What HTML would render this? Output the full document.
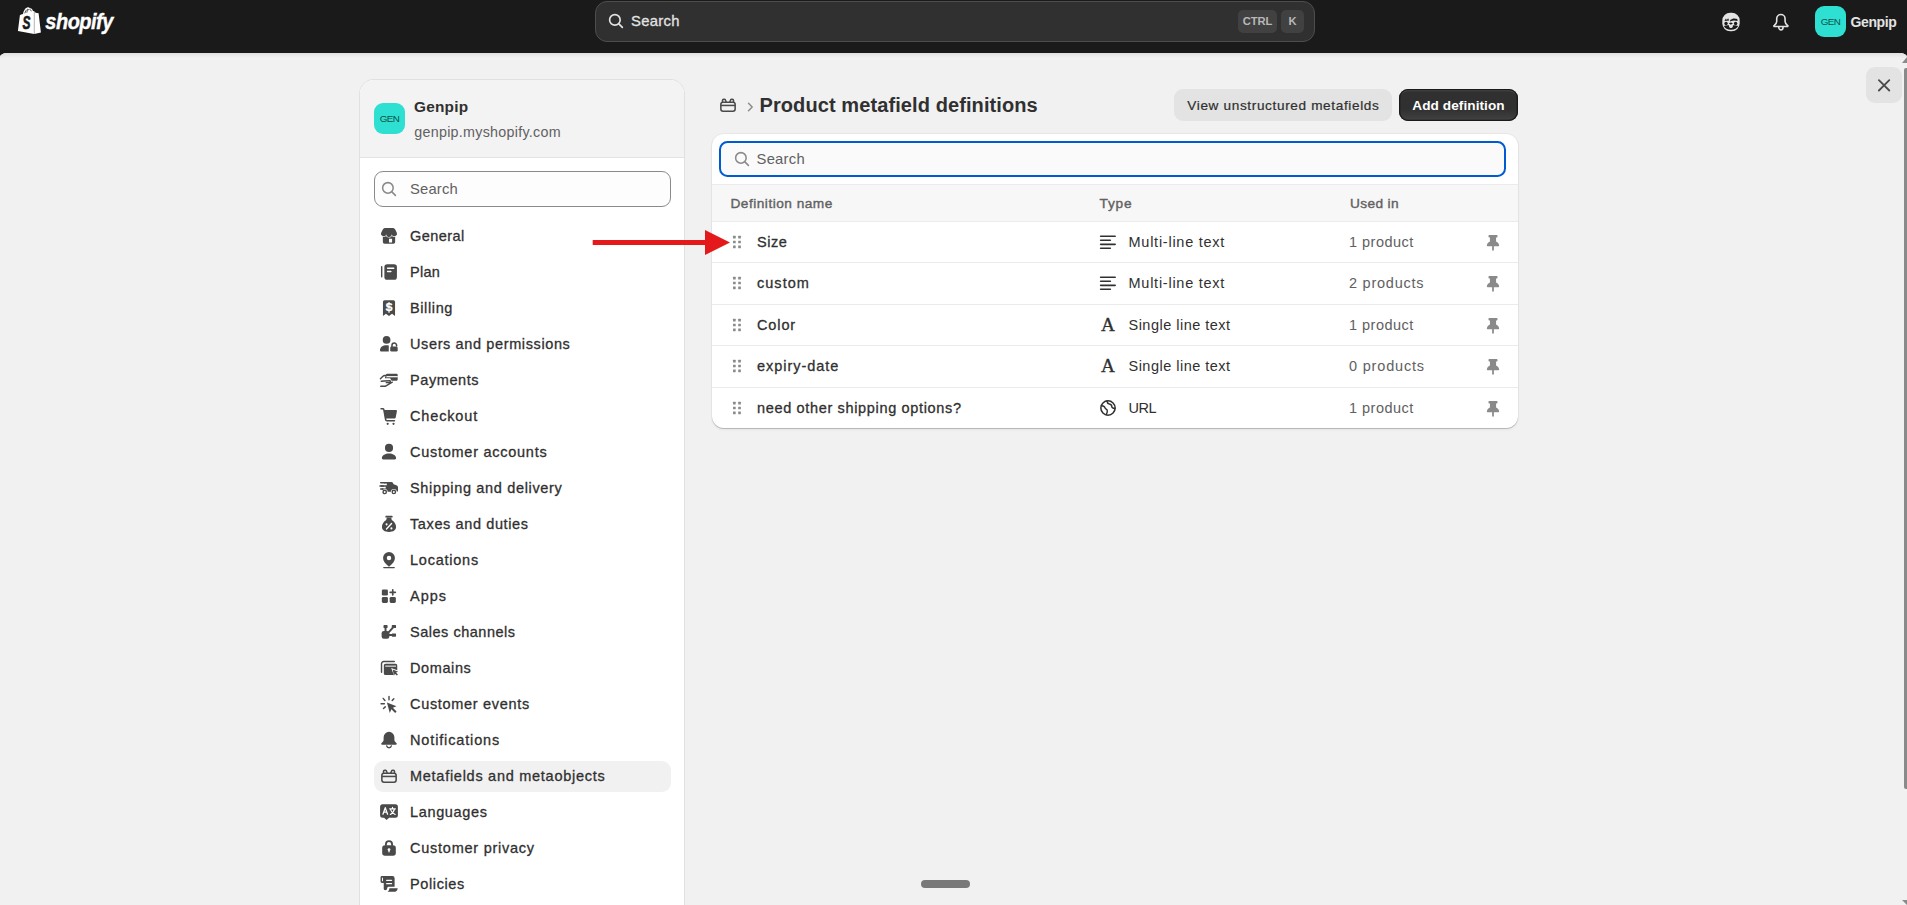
<!DOCTYPE html>
<html lang="en">
<head>
<meta charset="utf-8">
<title>Product metafield definitions</title>
<style>
*{box-sizing:border-box;margin:0;padding:0}
html,body{width:1907px;height:905px;overflow:hidden;background:#1a1a1a}
body{font-family:"Liberation Sans",sans-serif;color:#303030;position:relative}
.abs{position:absolute}
svg{display:block;overflow:visible}
div{white-space:nowrap}
/* top bar */
#logo{position:absolute;left:0;top:0}
#logotext{position:absolute;left:45.300px;top:8px;font-size:20px;font-weight:700;font-style:italic;color:#fff;line-height:26px;-webkit-text-stroke:.35px #fff;transform:scale(1,1.09);transform-origin:0 50%}
#gsearch{position:absolute;left:595px;top:1px;width:720px;height:41px;background:#303030;border:1px solid #4d4d4d;border-radius:12px}
#gsearch .ic{position:absolute;left:8.600px;top:8.200px}
#gsearch .ph{position:absolute;left:35px;top:9px;font-size:14.800px;line-height:20px;color:#e3e3e3;-webkit-text-stroke:.3px #e3e3e3}
.kbd{position:absolute;top:8px;height:23px;border-radius:5px;background:#414141;color:#b8b8b8;font-size:11.200px;line-height:22.600px;text-align:center;font-weight:700}
#avatar{position:absolute;left:1815px;top:6px;width:31px;height:31px;border-radius:9px;background:#2ee0d2;color:#0c5148;font-size:9.800px;line-height:31px;text-align:center}
#uname{position:absolute;left:1850.500px;top:12.200px;font-size:14px;line-height:20px;color:#e3e3e3;font-weight:700}
/* content frame */
#frame{position:absolute;left:0;top:53px;width:1907px;height:852px;background:#f1f1f1;border-radius:7px 7px 0 0/4px 4px 0 0;overflow:hidden}
#frame:before{content:"";position:absolute;left:0;top:0;right:0;height:5px;background:linear-gradient(#e0e0e0,#f1f1f1)}
/* sidebar */
#side{position:absolute;left:360px;top:80px;width:324px;height:840px;background:#fff;border-radius:14px 14px 0 0;box-shadow:0 0 0 1px rgba(0,0,0,.07);overflow:hidden}
#shead{position:absolute;left:0;top:0;width:100%;height:78px;background:#f3f3f3;border-bottom:1px solid #e3e3e3}
#savatar{position:absolute;left:14px;top:23px;width:31px;height:31px;border-radius:9px;background:#2ee0d2;color:#0c5148;font-size:9.800px;line-height:31px;text-align:center}
#sname{position:absolute;left:54px;top:16.900px;font-size:15.400px;line-height:20px;font-weight:700;color:#303030}
#sdom{position:absolute;left:54.300px;top:42.300px;font-size:14.300px;line-height:20px;color:#616161}
#ssearch{position:absolute;left:14px;top:91px;width:297px;height:36px;border:1px solid #8a8a8a;border-radius:9px;background:#fdfdfd}
#ssearch .ic{position:absolute;left:2.800px;top:6px}
#ssearch .ph{position:absolute;left:35px;top:7px;font-size:14.800px;line-height:20px;color:#616161}
.nav{position:absolute;left:14px;width:297px;height:31px;border-radius:9px}
.nav.sel{background:#f1f1f1}
.nav .ic{position:absolute;left:4.100px;top:3.800px;width:22px;height:22px}
.nav .lb{position:absolute;left:36px;top:4.800px;font-size:14.500px;line-height:20px;color:#303030;-webkit-text-stroke:.3px #303030}
/* main */
#crumb{position:absolute;left:717px;top:94.400px}
#chev{position:absolute;left:746.500px;top:101.500px}
#title{position:absolute;left:759.500px;top:91.200px;font-size:20px;line-height:28px;font-weight:700;color:#303030}
.btn{position:absolute;top:89px;height:32px;border-radius:9px;font-size:13.600px;line-height:33.200px;text-align:left;overflow:hidden}
#b1{left:1174px;width:218px;padding-left:13.300px;background:#e3e3e3;color:#303030;-webkit-text-stroke:.22px #303030}
#b2{left:1399px;width:119px;padding-left:13.300px;background:linear-gradient(#303030 0,#303030 62%,#424242 100%);color:#fff;font-weight:700;box-shadow:inset 0 0 0 1.300px #1a1a1a,inset 0 2.300px 0 rgba(255,255,255,.13)}
#card{position:absolute;left:712px;top:134px;width:806px;height:294px;background:#fff;border-radius:12px;box-shadow:0 1px 0 rgba(0,0,0,.17),0 2px 3px rgba(0,0,0,.05),0 0 0 1px rgba(0,0,0,.04);overflow:hidden}
#tsearch{position:absolute;left:7px;top:7px;width:787px;height:36px;border:2px solid #005bd3;border-radius:8.500px;background:#fafafa}
#tsearch .ic{position:absolute;left:9.500px;top:5px}
#tsearch .ph{position:absolute;left:35.500px;top:6px;font-size:14.800px;line-height:20px;color:#616161}
#thead{position:absolute;left:0;top:50px;width:100%;height:38px;background:#f7f7f7;border-top:1px solid #ebebeb}
#thead span{position:absolute;top:8.800px;font-size:13.700px;line-height:20px;color:#616161;-webkit-text-stroke:.38px #616161;white-space:nowrap}
.row{position:absolute;left:0;width:100%;height:43px;border-top:1px solid #ebebeb}
.row .drag{position:absolute;left:14px;top:8.600px}
.row .nm{position:absolute;left:45px;top:10.100px;font-size:14.500px;line-height:20px;color:#303030;-webkit-text-stroke:.3px #303030}
.row .ti{position:absolute;left:385px;top:8.600px}
.row .ty{position:absolute;left:416.500px;top:10.100px;font-size:14.500px;line-height:20px;color:#303030}
.row .us{position:absolute;left:637px;top:10.100px;font-size:14.500px;line-height:20px;color:#616161}
.row .pin{position:absolute;left:770px;top:9.700px}
#close{position:absolute;left:1866px;top:67px;width:36px;height:35.500px;border-radius:9px;background:#e3e3e3}
#pill{position:absolute;left:921px;top:880px;width:49px;height:8px;border-radius:4px;background:#797979}
</style>
</head>
<body>
<svg id="logo" width="60" height="40" viewBox="0 0 60 40"><path d="M17.900 30.900 L19.900 15.200 C20.500 14.700 21.600 14.300 23 13.900 C23.600 10.800 25.400 7.500 28 7.300 C28.900 7.300 29.500 7.600 29.900 8.200 C31.400 7.900 32.500 9.400 33 10.900 L34.200 11.300 L34.200 34 Z" fill="#fff"/><path d="M34.200 11.300 L35.600 12.800 L38.600 13.200 L40.900 32.500 L34.200 34 Z" fill="#fff"/><path d="M34.200 11.500 V33.900" stroke="#9a9a9a" stroke-width=".55"/><path d="M24.800 13.300 C25.300 11.300 26.500 9.500 27.900 9.100 M26.800 12.700 C27 11 28 9.500 29.300 9.400 M31.200 11.300 C31 10.400 30.600 9.700 30 9.300" fill="none" stroke="#1a1a1a" stroke-width=".8"/><text x="26.300" y="29" font-size="17.500" font-weight="700" font-style="italic" text-anchor="middle" fill="#1a1a1a" stroke="#1a1a1a" stroke-width=".7" transform="translate(26.600,0) scale(.68,1) translate(-26.600,0)" font-family="Liberation Sans,sans-serif">S</text></svg>
<div id="logotext" style="letter-spacing:-0.504px">shopify</div>
<div id="gsearch">
  <svg class="ic" width="22" height="22" viewBox="0 0 20 20"><circle cx="9" cy="9" r="4.800" fill="none" stroke="#e3e3e3" stroke-width="1.500"/><path d="M12.600 12.600 L15.800 15.800" stroke="#e3e3e3" stroke-width="1.500" stroke-linecap="round"/></svg>
  <div class="ph" style="letter-spacing:0.3px">Search</div>
  <div class="kbd" style="left:642px;width:39px;letter-spacing:-0.06px">CTRL</div>
  <div class="kbd" style="left:685px;width:23px">K</div>
</div>
<svg class="abs" style="left:1720px;top:11px" width="22" height="22" viewBox="0 0 20 20"><rect x="2.100" y="1.600" width="15.800" height="16.800" rx="7.200" fill="#e3e3e3"/><path d="M4 9.200l1.400-2.300.8 1.200 1.200-1.600.9 2.100c-1.500 0-2.900.2-4.300.6zM9.200 8.200c1.900-1.600 4.300-1.900 6.500-.9l.3 1.900c-2.300-.7-4.600-.6-6.800.4z" fill="#1a1a1a"/><circle cx="5.500" cy="11.300" r="1.550" fill="#1a1a1a"/><circle cx="14.200" cy="11.300" r="1.550" fill="#1a1a1a"/><path d="M8 11.200l1.900-.8 1.900.8-1.900 1.300z" fill="#1a1a1a"/><path d="M3.500 13.600c1.600-.5 3.100-.7 4.700-.5v.8c0 2.200 3.500 2.200 3.500 0v-.8c1.600-.2 3.100 0 4.800.5-.9 2.200-3.300 3.400-6.500 3.400s-5.600-1.200-6.500-3.400z" fill="#1a1a1a"/></svg>
<svg class="abs" style="left:1770px;top:11px" width="22" height="22" viewBox="0 0 20 20"><path d="M9.900 3.200a3.800 3.800 0 0 1 3.800 3.800v2.600c0 1.400.8 2.300 2.200 3.400.7.500.3 1.100-.3 1.100h-11.400c-.6 0-1-.6-.3-1.100 1.400-1.100 2.200-2 2.200-3.400v-2.600a3.800 3.800 0 0 1 3.800-3.800z" fill="none" stroke="#e3e3e3" stroke-width="1.450" stroke-linejoin="round"/><path d="M7.900 14.500c0 3.600 4 3.600 4 0" fill="none" stroke="#e3e3e3" stroke-width="1.450" stroke-linecap="round"/></svg>
<div id="avatar" style="letter-spacing:-0.621px">GEN</div>
<div id="uname" style="letter-spacing:-0.375px">Genpip</div>
<div id="frame"></div>
<div id="side">
  <div id="shead">
    <div id="savatar" style="letter-spacing:-0.621px">GEN</div>
    <div id="sname" style="letter-spacing:0.22px">Genpip</div>
    <div id="sdom" style="letter-spacing:0.268px">genpip.myshopify.com</div>
  </div>
  <div id="ssearch">
    <svg class="ic" width="22" height="22" viewBox="0 0 20 20"><circle cx="9" cy="9" r="4.800" fill="none" stroke="#8a8a8a" stroke-width="1.400"/><path d="M12.600 12.600 L15.800 15.800" stroke="#8a8a8a" stroke-width="1.400" stroke-linecap="round"/></svg>
    <div class="ph" style="letter-spacing:0.18px">Search</div>
  </div>
  <div class="nav" style="top:141.2px"><svg class="ic" viewBox="0 0 20 20"><path d="M4.400 8.500h11.200v7a1.600 1.600 0 0 1-1.600 1.600h-8a1.600 1.600 0 0 1-1.600-1.600z" fill="#4a4a4a"/><rect x="10" y="12.400" width="2.800" height="3.500" rx=".3" fill="#fff"/><path d="M7 2.800h6c1.300 0 2.300.6 2.900 1.800l1.200 2.500a2.300 2.300 0 0 1-4.700 1.400 2.400 2.400 0 0 1-4.800 0 2.300 2.300 0 0 1-4.700-1.400l1.200-2.500c.6-1.200 1.600-1.800 2.900-1.800z" fill="#4a4a4a" stroke="#fff" stroke-width="1.100" paint-order="stroke"/></svg><div class="lb" style="letter-spacing:0.448px">General</div></div>
    <div class="nav" style="top:177.2px"><svg class="ic" viewBox="0 0 20 20"><rect x="2.700" y="4.600" width="1.300" height="10.400" rx=".65" fill="#4a4a4a"/><rect x="5.800" y="2.900" width="11.400" height="14.200" rx="2.600" fill="#4a4a4a"/><path d="M8.700 6.600h5.600M8.700 9.600h3" stroke="#fff" stroke-width="1.300" stroke-linecap="round"/></svg><div class="lb" style="letter-spacing:0.25px">Plan</div></div>
    <div class="nav" style="top:213.2px"><svg class="ic" viewBox="0 0 20 20"><path d="M6 2.900h8a1.500 1.500 0 0 1 1.500 1.500v12.800l-2.750-2-2.750 2-2.750-2-2.750 2v-12.800a1.500 1.500 0 0 1 1.500-1.500z" fill="#4a4a4a"/><text x="10" y="12.700" font-size="9.800" font-weight="700" text-anchor="middle" fill="#fff" stroke="#fff" stroke-width=".25" font-family="Liberation Sans,sans-serif">S</text><path d="M10 4.800v9.600" stroke="#fff" stroke-width="1.100"/></svg><div class="lb" style="letter-spacing:0.615px">Billing</div></div>
    <div class="nav" style="top:249.2px"><svg class="ic" viewBox="0 0 20 20"><circle cx="7.800" cy="6.300" r="3.500" fill="#4a4a4a"/><path d="M1.800 15.600c0-2.700 2.600-4.500 6-4.500.7 0 1.400.1 2 .3v5.500h-6.800a1.200 1.200 0 0 1-1.200-1.300z" fill="#4a4a4a"/><rect x="11.100" y="12.300" width="6.800" height="4.600" rx="1.300" fill="#4a4a4a"/><path d="M12.700 12.500v-1.300a2.100 2.100 0 0 1 4.200 0v.5" fill="none" stroke="#4a4a4a" stroke-width="1.400" stroke-linecap="round"/></svg><div class="lb" style="letter-spacing:0.62px">Users and permissions</div></div>
    <div class="nav" style="top:285.2px"><svg class="ic" viewBox="0 0 20 20"><path d="M8.300 4.300h8.600a1 1 0 0 1 1 1v4.300a1 1 0 0 1-1 1h-4.500l-1.400-2.300h-4.800l1.100-3.200a1.300 1.300 0 0 1 1-.8z" fill="#4a4a4a"/><path d="M7.500 7h10.500" stroke="#fff" stroke-width="1.100"/><path d="M2.200 8.800l2.300-2.200c.5-.5 1.100-.7 1.800-.7h1.500M3 11.200l2.500-.3 5 -.2c1 0 1 1.400 0 1.500l-3 .2M2.500 15.700h4l6.500-3.700" fill="none" stroke="#4a4a4a" stroke-width="1.300" stroke-linecap="round" stroke-linejoin="round"/></svg><div class="lb" style="letter-spacing:0.585px">Payments</div></div>
    <div class="nav" style="top:321.2px"><svg class="ic" viewBox="0 0 20 20"><path d="M2.800 3.400h1.500a1 1 0 0 1 1 .8l1.700 9.200a1 1 0 0 0 1 .9h7" fill="none" stroke="#4a4a4a" stroke-width="1.400" stroke-linecap="round" stroke-linejoin="round"/><path d="M5.300 4.600h11a.9.900 0 0 1 .9 1.100l-1.100 5.600a1.100 1.100 0 0 1-1.100.9h-8.400z" fill="#4a4a4a"/><circle cx="8.800" cy="17.100" r="1" fill="#4a4a4a"/><circle cx="14.100" cy="17.100" r="1" fill="#4a4a4a"/></svg><div class="lb" style="letter-spacing:0.845px">Checkout</div></div>
    <div class="nav" style="top:357.2px"><svg class="ic" viewBox="0 0 20 20"><circle cx="10" cy="6.300" r="3.700" fill="#4a4a4a"/><path d="M3.500 15.300c.4-2.400 3.100-4 6.500-4s6.100 1.600 6.500 4a1.300 1.300 0 0 1-1.300 1.500h-10.400a1.300 1.300 0 0 1-1.300-1.500z" fill="#4a4a4a"/></svg><div class="lb" style="letter-spacing:0.735px">Customer accounts</div></div>
    <div class="nav" style="top:393.2px"><svg class="ic" viewBox="0 0 20 20"><path d="M6.500 4.500h5.700a1.500 1.500 0 0 1 1.400.9l.6 1.300 2.500.7a2 2 0 0 1 1.500 1.900v3.200a1 1 0 0 1-1 1h-11.200v-1.600h-2.500v-1.400h3.500v-1.700h-4.500v-1.400h5.500v-1.600h-2.500z" fill="#4a4a4a"/><circle cx="6.100" cy="13.600" r="2.700" fill="#fff"/><circle cx="14.400" cy="13.600" r="2.700" fill="#fff"/><circle cx="6.100" cy="13.600" r="1.500" fill="none" stroke="#4a4a4a" stroke-width="1.300"/><circle cx="14.400" cy="13.600" r="1.500" fill="none" stroke="#4a4a4a" stroke-width="1.300"/><path d="M2.500 5.200h4M1.800 8.100h3M2.500 11h2" stroke="#4a4a4a" stroke-width="1.400" stroke-linecap="round"/></svg><div class="lb" style="letter-spacing:0.656px">Shipping and delivery</div></div>
    <div class="nav" style="top:429.2px"><svg class="ic" viewBox="0 0 20 20"><rect x="6.700" y="2.500" width="6.600" height="1.700" rx=".6" fill="#4a4a4a"/><path d="M8 4.200h4l.5 2.200c2.300 1.300 3.900 3.700 3.900 6.100 0 3-2.300 4.700-6.400 4.700s-6.400-1.700-6.400-4.700c0-2.400 1.600-4.800 3.900-6.100z" fill="#4a4a4a"/><path d="M7.700 14.600l4.600-5" stroke="#fff" stroke-width="1.200" stroke-linecap="round"/><circle cx="7.800" cy="10.300" r=".95" fill="#fff"/><circle cx="12.200" cy="14" r=".95" fill="#fff"/></svg><div class="lb" style="letter-spacing:0.61px">Taxes and duties</div></div>
    <div class="nav" style="top:465.2px"><svg class="ic" viewBox="0 0 20 20"><path d="M10 2.800a5.400 5.400 0 0 1 5.400 5.400c0 2.700-2.100 5.300-5.400 8-3.300-2.700-5.400-5.300-5.400-8a5.400 5.400 0 0 1 5.400-5.400zm0 3.300a2.050 2.050 0 1 0 0 4.100 2.050 2.050 0 0 0 0-4.100z" fill="#4a4a4a" fill-rule="evenodd"/><path d="M5.300 16.900h9.400" stroke="#4a4a4a" stroke-width="1.300" stroke-linecap="round"/></svg><div class="lb" style="letter-spacing:0.763px">Locations</div></div>
    <div class="nav" style="top:501.2px"><svg class="ic" viewBox="0 0 20 20"><rect x="3.500" y="4.100" width="5.500" height="5.400" rx="1.200" fill="#4a4a4a"/><rect x="3.500" y="10.900" width="5.500" height="5.400" rx="1.200" fill="#4a4a4a"/><rect x="10.600" y="10.900" width="5.600" height="5.400" rx="1.200" fill="#4a4a4a"/><path d="M13.400 4.300v4.800M11 6.700h4.800" stroke="#4a4a4a" stroke-width="1.500" stroke-linecap="round"/></svg><div class="lb" style="letter-spacing:1.006px">Apps</div></div>
    <div class="nav" style="top:537.2px"><svg class="ic" viewBox="0 0 20 20"><rect x="3.300" y="9.200" width="7" height="7" rx="2" fill="#4a4a4a"/><rect x="5" y="3.700" width="3.700" height="2.700" rx=".6" fill="#4a4a4a"/><rect x="12.500" y="3.700" width="3.900" height="2.700" rx=".6" fill="#4a4a4a"/><rect x="12.500" y="11.300" width="3.900" height="3" rx=".6" fill="#4a4a4a"/><path d="M6.850 5v5M14 5.500l-5 5.500M9 12.800h4" stroke="#4a4a4a" stroke-width="1.800" stroke-linecap="round"/></svg><div class="lb" style="letter-spacing:0.518px">Sales channels</div></div>
    <div class="nav" style="top:573.2px"><svg class="ic" viewBox="0 0 20 20"><path d="M3.200 13.800v-7.700a2 2 0 0 1 2-2h9.600" fill="none" stroke="#4a4a4a" stroke-width="1.300" stroke-linecap="round"/><path d="M6.800 6.100h9.200a1.500 1.500 0 0 1 1.500 1.500v4.500l-5.500-2.100 2.400 6.400h-7.600a1.500 1.500 0 0 1-1.500-1.500v-7.300a1.500 1.500 0 0 1 1.500-1.500z" fill="#4a4a4a"/><path d="M6.600 8.300h9.800" stroke="#fff" stroke-width=".9"/><path d="M13.400 11.400l4.900 1.900-1.900.9 1.700 1.700-1 1-1.700-1.700-.9 1.900z" fill="#4a4a4a"/></svg><div class="lb" style="letter-spacing:0.61px">Domains</div></div>
    <div class="nav" style="top:609.2px"><svg class="ic" viewBox="0 0 20 20"><path d="M8.100 8.700l8.700 3.300-3.300 1.500 3.400 3.400-1.300 1.300-3.400-3.400-1.500 3.300z" fill="#4a4a4a"/><path d="M10 3.200v3M4.700 4.900l1.600 1.900M2.800 9.700h3M5 14.100l1.600-1.500M14.400 5.300l-1.500 1.600" stroke="#4a4a4a" stroke-width="1.300" stroke-linecap="round"/></svg><div class="lb" style="letter-spacing:0.684px">Customer events</div></div>
    <div class="nav" style="top:645.2px"><svg class="ic" viewBox="0 0 20 20"><path d="M10 2.600a4.900 4.900 0 0 1 4.900 4.900v2.300c0 .6.200 1.100.5 1.500l1.500 1.700a.8.800 0 0 1-.6 1.300h-12.600a.8.800 0 0 1-.6-1.300l1.500-1.700c.3-.4.500-.9.500-1.500v-2.300a4.900 4.900 0 0 1 4.900-4.900z" fill="#4a4a4a"/><path d="M7.900 15.400a2.150 2.150 0 0 0 4.200 0" fill="none" stroke="#4a4a4a" stroke-width="1.300" stroke-linecap="round"/></svg><div class="lb" style="letter-spacing:0.858px">Notifications</div></div>
    <div class="nav sel" style="top:681.2px"><svg class="ic" viewBox="0 0 20 20"><rect x="3.500" y="7.500" width="13" height="8.200" rx="2" fill="none" stroke="#4a4a4a" stroke-width="1.400"/><path d="M5 7.500v-1.600a1.100 1.100 0 0 1 1.100-1.100h.5a1.100 1.100 0 0 1 1 .6l.9 2.100M11.500 7.500l.9-2.100a1.100 1.100 0 0 1 1-.6h.5a1.100 1.100 0 0 1 1.100 1.100v1.600" fill="none" stroke="#4a4a4a" stroke-width="1.400" stroke-linejoin="round"/><path d="M3.600 10.400h12.800" stroke="#4a4a4a" stroke-width="1.400"/></svg><div class="lb" style="letter-spacing:0.727px">Metafields and metaobjects</div></div>
    <div class="nav" style="top:717.2px"><svg class="ic" viewBox="0 0 20 20"><path d="M4.200 2.900h11.600a2.300 2.300 0 0 1 2.300 2.300v7.800a2.300 2.300 0 0 1-2.300 2.300h-5.700l-2.300 2-2.300-2h-1.300a2.300 2.300 0 0 1-2.300-2.300v-7.800a2.300 2.300 0 0 1 2.300-2.300z" fill="#4a4a4a"/><path d="M4.500 12l2.100-5.900 2.100 5.900M5.200 10.200h2.800" fill="none" stroke="#fff" stroke-width="1.150" stroke-linejoin="round" stroke-linecap="round"/><path d="M10.600 7.100h5.200M13.200 5.700v1.400M11.200 12.200c2-1 3.300-2.600 3.700-4.800M11.500 8.100c.6 1.800 2 3.200 4.100 4.100" fill="none" stroke="#fff" stroke-width="1.050" stroke-linecap="round"/></svg><div class="lb" style="letter-spacing:0.652px">Languages</div></div>
    <div class="nav" style="top:753.2px"><svg class="ic" viewBox="0 0 20 20"><rect x="3.800" y="7.600" width="12.400" height="9.400" rx="2.500" fill="#4a4a4a"/><path d="M7.200 8v-1.500a2.800 2.800 0 0 1 5.600 0v1.500" fill="none" stroke="#4a4a4a" stroke-width="1.700"/><circle cx="10" cy="11.400" r="1.250" fill="#fff"/><rect x="9.400" y="11.800" width="1.200" height="2.300" rx=".6" fill="#fff"/></svg><div class="lb" style="letter-spacing:0.751px">Customer privacy</div></div>
    <div class="nav" style="top:789.2px"><svg class="ic" viewBox="0 0 20 20"><path d="M3.600 2.700h9.500a2 2 0 0 1 2 2v7.800h-5.400a1.300 1.300 0 0 0-1.300 1.300 2 2 0 0 1-1.900 1.900 1.300 1.300 0 0 1-1.300-1.300v-5.400h-1.600a1.300 1.300 0 0 1-1.300-1.300v-3.700a1.300 1.300 0 0 1 1.300-1.300z" fill="#4a4a4a"/><rect x="3.600" y="4.100" width=".9" height="3.500" rx=".4" fill="#fff"/><path d="M7.900 6.700h4.400M7.900 9.700h4.400" stroke="#fff" stroke-width="1.200" stroke-linecap="round"/><path d="M10.400 13.900h7.500c-.2 1.900-1.200 3.100-2.600 3.100h-6.800c1-.4 1.800-1.500 1.900-3.100z" fill="#4a4a4a"/></svg><div class="lb" style="letter-spacing:0.616px">Policies</div></div>
</div>
<svg id="crumb" width="22" height="22" viewBox="0 0 20 20"><rect x="3.500" y="7.500" width="13" height="8.200" rx="2" fill="none" stroke="#4a4a4a" stroke-width="1.400"/><path d="M5 7.500v-1.600a1.100 1.100 0 0 1 1.100-1.100h.5a1.100 1.100 0 0 1 1 .6l.9 2.100M11.500 7.500l.9-2.100a1.100 1.100 0 0 1 1-.6h.5a1.100 1.100 0 0 1 1.100 1.100v1.600" fill="none" stroke="#4a4a4a" stroke-width="1.400" stroke-linejoin="round"/><path d="M3.600 10.400h12.800" stroke="#4a4a4a" stroke-width="1.400"/></svg>
<svg id="chev" width="7" height="10" viewBox="0 0 7 10"><path d="M1.500 1.200l3.700 3.800-3.700 3.800" fill="none" stroke="#8a8a8a" stroke-width="1.400" stroke-linecap="round" stroke-linejoin="round"/></svg>
<div id="title" style="letter-spacing:0.094px">Product metafield definitions</div>
<div class="btn" id="b1" style="letter-spacing:0.639px">View unstructured metafields</div>
<div class="btn" id="b2" style="letter-spacing:0.075px">Add definition</div>
<div id="card">
  <div id="tsearch">
    <svg class="ic" width="22" height="22" viewBox="0 0 20 20"><circle cx="9" cy="9" r="4.800" fill="none" stroke="#8a8a8a" stroke-width="1.400"/><path d="M12.600 12.600 L15.800 15.800" stroke="#8a8a8a" stroke-width="1.400" stroke-linecap="round"/></svg>
    <div class="ph" style="letter-spacing:0.26px">Search</div>
  </div>
  <div id="thead"><span style="left:18.500px;letter-spacing:0.481px">Definition name</span><span style="left:387.500px;letter-spacing:0.787px">Type</span><span style="left:638px;letter-spacing:0.371px">Used in</span></div>
  <div class="row" style="top:87px"><svg class="drag" width="22" height="22" viewBox="0 0 20 20"><rect x="6.4" y="4.4" width="2.400" height="2.400" rx=".3" fill="#8a8a8a"/><rect x="6.4" y="8.8" width="2.400" height="2.400" rx=".3" fill="#8a8a8a"/><rect x="6.4" y="13.2" width="2.400" height="2.400" rx=".3" fill="#8a8a8a"/><rect x="11.1" y="4.4" width="2.400" height="2.400" rx=".3" fill="#8a8a8a"/><rect x="11.1" y="8.8" width="2.400" height="2.400" rx=".3" fill="#8a8a8a"/><rect x="11.1" y="13.2" width="2.400" height="2.400" rx=".3" fill="#8a8a8a"/></svg><div class="nm" style="letter-spacing:0.52px">Size</div><svg class="ti" width="22" height="22" viewBox="0 0 20 20"><path d="M3.300 4.800h13.200M3.300 8.400h8.800M3.300 12.100h13.200M3.300 15.700h8.800" stroke="#303030" stroke-width="1.500" stroke-linecap="round"/></svg><div class="ty" style="letter-spacing:0.747px">Multi-line text</div><div class="us" style="letter-spacing:0.476px">1 product</div><svg class="pin" width="22" height="22" viewBox="0 0 20 20"><path d="M6.600 2.700h6.800a.7.700 0 0 1 .7.700v1a.7.700 0 0 1-.7.700h-.6v3.500c1.600.8 2.600 2 2.800 3.400a.8.800 0 0 1-.8.900h-4v3.300l-.8 1.300-.8-1.300v-3.300h-4a.8.800 0 0 1-.8-.9c.2-1.400 1.200-2.600 2.800-3.400v-3.500h-.6a.7.700 0 0 1-.7-.7v-1a.7.700 0 0 1 .7-.7z" fill="#8a8a8a"/></svg></div>
    <div class="row" style="top:128px"><svg class="drag" width="22" height="22" viewBox="0 0 20 20"><rect x="6.4" y="4.4" width="2.400" height="2.400" rx=".3" fill="#8a8a8a"/><rect x="6.4" y="8.8" width="2.400" height="2.400" rx=".3" fill="#8a8a8a"/><rect x="6.4" y="13.2" width="2.400" height="2.400" rx=".3" fill="#8a8a8a"/><rect x="11.1" y="4.4" width="2.400" height="2.400" rx=".3" fill="#8a8a8a"/><rect x="11.1" y="8.8" width="2.400" height="2.400" rx=".3" fill="#8a8a8a"/><rect x="11.1" y="13.2" width="2.400" height="2.400" rx=".3" fill="#8a8a8a"/></svg><div class="nm" style="letter-spacing:1.026px">custom</div><svg class="ti" width="22" height="22" viewBox="0 0 20 20"><path d="M3.300 4.800h13.200M3.300 8.400h8.800M3.300 12.100h13.200M3.300 15.700h8.800" stroke="#303030" stroke-width="1.500" stroke-linecap="round"/></svg><div class="ty" style="letter-spacing:0.747px">Multi-line text</div><div class="us" style="letter-spacing:0.762px">2 products</div><svg class="pin" width="22" height="22" viewBox="0 0 20 20"><path d="M6.600 2.700h6.800a.7.700 0 0 1 .7.700v1a.7.700 0 0 1-.7.700h-.6v3.500c1.600.8 2.600 2 2.800 3.400a.8.800 0 0 1-.8.900h-4v3.300l-.8 1.300-.8-1.300v-3.300h-4a.8.800 0 0 1-.8-.9c.2-1.400 1.200-2.600 2.800-3.400v-3.500h-.6a.7.700 0 0 1-.7-.7v-1a.7.700 0 0 1 .7-.7z" fill="#8a8a8a"/></svg></div>
    <div class="row" style="top:170px"><svg class="drag" width="22" height="22" viewBox="0 0 20 20"><rect x="6.4" y="4.4" width="2.400" height="2.400" rx=".3" fill="#8a8a8a"/><rect x="6.4" y="8.8" width="2.400" height="2.400" rx=".3" fill="#8a8a8a"/><rect x="6.4" y="13.2" width="2.400" height="2.400" rx=".3" fill="#8a8a8a"/><rect x="11.1" y="4.4" width="2.400" height="2.400" rx=".3" fill="#8a8a8a"/><rect x="11.1" y="8.8" width="2.400" height="2.400" rx=".3" fill="#8a8a8a"/><rect x="11.1" y="13.2" width="2.400" height="2.400" rx=".3" fill="#8a8a8a"/></svg><div class="nm" style="letter-spacing:0.881px">Color</div><svg class="ti" width="22" height="22" viewBox="0 0 20 20"><text x="10" y="15.900" font-size="17.500" text-anchor="middle" fill="#303030" stroke="#303030" stroke-width=".3" font-family="Liberation Serif,serif">A</text></svg><div class="ty" style="letter-spacing:0.484px">Single line text</div><div class="us" style="letter-spacing:0.476px">1 product</div><svg class="pin" width="22" height="22" viewBox="0 0 20 20"><path d="M6.600 2.700h6.800a.7.700 0 0 1 .7.700v1a.7.700 0 0 1-.7.700h-.6v3.500c1.600.8 2.600 2 2.800 3.400a.8.800 0 0 1-.8.900h-4v3.300l-.8 1.300-.8-1.300v-3.300h-4a.8.800 0 0 1-.8-.9c.2-1.400 1.200-2.600 2.800-3.400v-3.500h-.6a.7.700 0 0 1-.7-.7v-1a.7.700 0 0 1 .7-.7z" fill="#8a8a8a"/></svg></div>
    <div class="row" style="top:211px"><svg class="drag" width="22" height="22" viewBox="0 0 20 20"><rect x="6.4" y="4.4" width="2.400" height="2.400" rx=".3" fill="#8a8a8a"/><rect x="6.4" y="8.8" width="2.400" height="2.400" rx=".3" fill="#8a8a8a"/><rect x="6.4" y="13.2" width="2.400" height="2.400" rx=".3" fill="#8a8a8a"/><rect x="11.1" y="4.4" width="2.400" height="2.400" rx=".3" fill="#8a8a8a"/><rect x="11.1" y="8.8" width="2.400" height="2.400" rx=".3" fill="#8a8a8a"/><rect x="11.1" y="13.2" width="2.400" height="2.400" rx=".3" fill="#8a8a8a"/></svg><div class="nm" style="letter-spacing:0.955px">expiry-date</div><svg class="ti" width="22" height="22" viewBox="0 0 20 20"><text x="10" y="15.900" font-size="17.500" text-anchor="middle" fill="#303030" stroke="#303030" stroke-width=".3" font-family="Liberation Serif,serif">A</text></svg><div class="ty" style="letter-spacing:0.484px">Single line text</div><div class="us" style="letter-spacing:0.818px">0 products</div><svg class="pin" width="22" height="22" viewBox="0 0 20 20"><path d="M6.600 2.700h6.800a.7.700 0 0 1 .7.700v1a.7.700 0 0 1-.7.700h-.6v3.500c1.600.8 2.600 2 2.800 3.400a.8.800 0 0 1-.8.900h-4v3.300l-.8 1.300-.8-1.300v-3.300h-4a.8.800 0 0 1-.8-.9c.2-1.400 1.200-2.600 2.800-3.400v-3.500h-.6a.7.700 0 0 1-.7-.7v-1a.7.700 0 0 1 .7-.7z" fill="#8a8a8a"/></svg></div>
    <div class="row" style="top:253px"><svg class="drag" width="22" height="22" viewBox="0 0 20 20"><rect x="6.4" y="4.4" width="2.400" height="2.400" rx=".3" fill="#8a8a8a"/><rect x="6.4" y="8.8" width="2.400" height="2.400" rx=".3" fill="#8a8a8a"/><rect x="6.4" y="13.2" width="2.400" height="2.400" rx=".3" fill="#8a8a8a"/><rect x="11.1" y="4.4" width="2.400" height="2.400" rx=".3" fill="#8a8a8a"/><rect x="11.1" y="8.8" width="2.400" height="2.400" rx=".3" fill="#8a8a8a"/><rect x="11.1" y="13.2" width="2.400" height="2.400" rx=".3" fill="#8a8a8a"/></svg><div class="nm" style="letter-spacing:0.657px">need other shipping options?</div><svg class="ti" width="22" height="22" viewBox="0 0 20 20"><circle cx="10" cy="10" r="6.500" fill="none" stroke="#303030" stroke-width="1.400"/><path d="M4 8c1.700-.1 2.900.6 3.300 1.900.3 1.100 1.600 1.200 2 2.100.4.900 0 2.100-.9 4M9 3.700c.2 1.500 1 2.400 2.300 2.700 1.500.3 2.200 1.100 2.100 2.300 0 .9.800 1.600 2.800 1.800" fill="none" stroke="#303030" stroke-width="1.300" stroke-linecap="round"/></svg><div class="ty" style="letter-spacing:-0.518px">URL</div><div class="us" style="letter-spacing:0.476px">1 product</div><svg class="pin" width="22" height="22" viewBox="0 0 20 20"><path d="M6.600 2.700h6.800a.7.700 0 0 1 .7.700v1a.7.700 0 0 1-.7.700h-.6v3.500c1.600.8 2.600 2 2.800 3.400a.8.800 0 0 1-.8.900h-4v3.300l-.8 1.300-.8-1.300v-3.300h-4a.8.800 0 0 1-.8-.9c.2-1.400 1.200-2.600 2.800-3.400v-3.500h-.6a.7.700 0 0 1-.7-.7v-1a.7.700 0 0 1 .7-.7z" fill="#8a8a8a"/></svg></div>
</div>
<div id="close"><svg width="36" height="35.500" viewBox="0 0 36 35.500"><path d="M12.900 13.100 L23.300 23.500 M23.300 13.100 L12.900 23.500" stroke="#4a4a4a" stroke-width="1.800" stroke-linecap="round"/></svg></div>
<div id="pill"></div>
<svg class="abs" style="left:590px;top:228px" width="145" height="30" viewBox="0 0 145 30"><path d="M2.700 12h113v5h-113z" fill="#e3191c"/><path d="M115 2l25 12.500-25 12.500z" fill="#e3191c"/></svg>
<div class="abs" style="left:1904px;top:68px;width:4px;height:721px;background:#8a8a8a;border-radius:2px 0 0 2px"></div>
<svg class="abs" style="left:1902px;top:57px" width="5" height="6" viewBox="0 0 5 6"><path d="M0 6l5-6v6z" fill="#8a8a8a"/></svg>
<svg class="abs" style="left:1902px;top:900px" width="5" height="5" viewBox="0 0 5 5"><path d="M0 0h5v5z" fill="#8a8a8a"/></svg>
</body>
</html>
